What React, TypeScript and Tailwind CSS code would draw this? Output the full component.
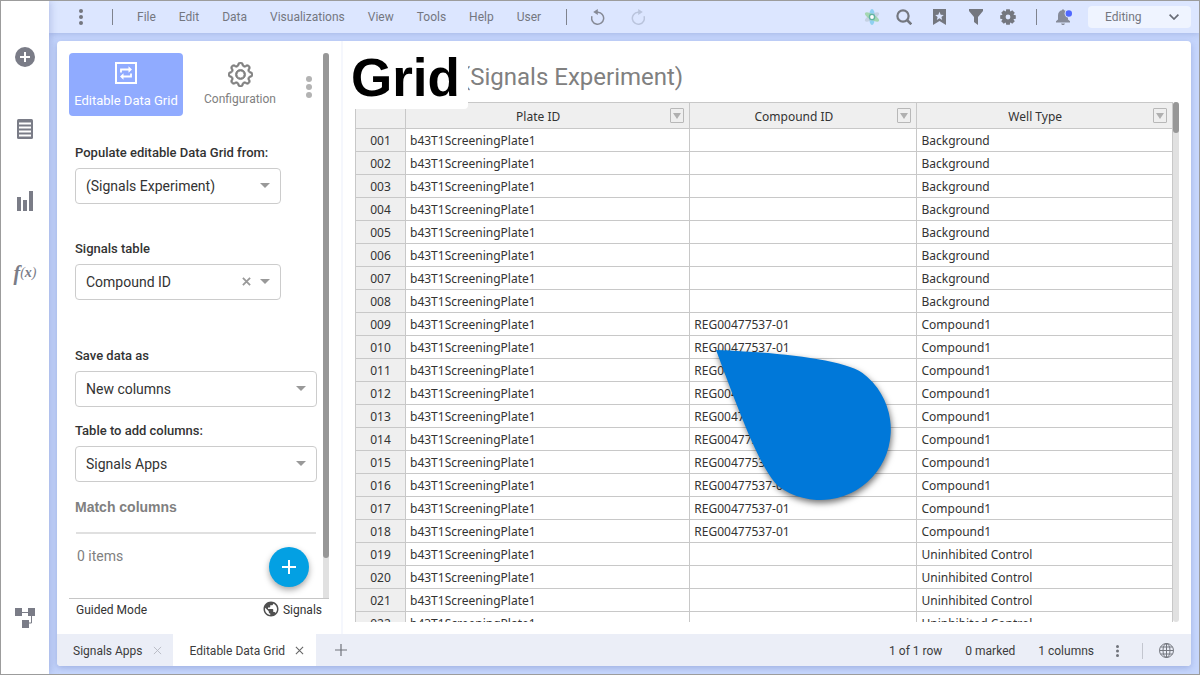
import React from "react";
import { BsGear } from "react-icons/bs";
import { MdPublic } from "react-icons/md";

const menus = ["File", "Edit", "Data", "Visualizations", "View", "Tools", "Help", "User"];

const rows = Array.from({ length: 22 }, (_, i) => ({
  id: String(i + 1).padStart(3, "0"),
  plate: "b43T1ScreeningPlate1",
  compound: i >= 8 && i < 18 ? "REG00477537-01" : "",
  well: i < 8 ? "Background" : i < 18 ? "Compound1" : "Uninhibited Control",
}));

function Dots({ r, gap, className }: { r: number; gap: number; className: string }) {
  const h = gap * 2 + r * 2;
  return (
    <svg width={r * 2} height={h} viewBox={`0 0 ${r * 2} ${h}`} className={className} fill="currentColor" aria-hidden="true">
      {[0, 1, 2].map((n) => (
        <circle key={n} cx={r} cy={r + n * gap} r={r} />
      ))}
    </svg>
  );
}

function Cross({ size, width, className }: { size: number; width: number; className: string }) {
  return (
    <svg width={size} height={size} viewBox="0 0 10 10" className={className} fill="none" stroke="currentColor" strokeWidth={width} aria-hidden="true">
      <path d="M1 1l8 8M9 1l-8 8" />
    </svg>
  );
}

function Gear() {
  return (
    <svg width="16" height="16" viewBox="0 0 16 16" fill="currentColor" aria-hidden="true">
      <circle cx="8" cy="8" r="4.2" fill="none" stroke="currentColor" strokeWidth="3.6" />
      {[0, 45, 90, 135, 180, 225, 270, 315].map((a) => (
        <path key={a} d="M6.2 0.2h3.6l.5 3h-4.6z" transform={`rotate(${a} 8 8)`} />
      ))}
    </svg>
  );
}

function Field({ id, label, value, wide, clearable }: { id: string; label: string; value: string; wide?: boolean; clearable?: boolean }) {
  return (
    <div className="flex flex-col">
      <label htmlFor={id} className="h-4 text-[13px] leading-4 font-medium text-[#333]">
        {label}
      </label>
      <div className={wide ? "relative mt-[7px] w-[242px]" : "relative mt-[7px] w-[206px]"}>
        <select id={id} className="h-9 w-full appearance-none rounded border border-[#ccc] bg-white px-2.5 text-sm text-[#333]">
          <option>{value}</option>
        </select>
        <div className="pointer-events-none absolute inset-y-0 right-[11px] flex items-center gap-[9px] pb-px text-[#999]">
          {clearable && <Cross size={9} width={2} className="" />}
          <svg width="10" height="5" viewBox="0 0 10 5" fill="currentColor" aria-hidden="true">
            <path d="M0 0h10L5 5z" />
          </svg>
        </div>
      </div>
    </div>
  );
}

function Sidebar() {
  return (
    <nav aria-label="Tools" className="z-10 flex w-12 shrink-0 flex-col items-center bg-white pt-[46px] pb-[46px] text-[#7a7c87] shadow-[1px_0_8px_rgba(90,110,180,0.35)]">
      <button aria-label="Add" className="flex h-5 items-center">
        <svg width="20" height="20" viewBox="0 0 20 20">
          <circle cx="10" cy="10" r="10" fill="currentColor" />
          <path d="M10 5v10M5 10h10" stroke="#fff" strokeWidth="2" />
        </svg>
      </button>
      <button aria-label="Data" className="mt-[52px] flex h-5 items-center">
        <svg width="16" height="20" viewBox="0 0 16 20">
          <rect width="16" height="20" rx="1.5" fill="currentColor" />
          <path d="M2 4.5h12M2 8.5h12M2 12.5h12M2 16.5h12" stroke="#fff" strokeWidth="1.8" />
        </svg>
      </button>
      <button aria-label="Visualizations" className="mt-[52px] flex h-5 items-center">
        <svg width="16" height="20" viewBox="0 0 16 20" fill="currentColor">
          <path d="M0 6h4v14H0zM6 9h4v11H6zM12 0h4v20h-4z" />
        </svg>
      </button>
      <button aria-label="Functions" className="mt-[52px] flex h-5 items-center font-['Liberation_Serif',serif] font-bold italic">
        <span className="text-xl leading-5">f</span>
        <span className="text-sm leading-5">
          <span className="font-normal">(</span>x<span className="font-normal">)</span>
        </span>
      </button>
      <button aria-label="Data canvas" className="mt-auto flex h-5 items-center">
        <svg width="20" height="20" viewBox="0 0 20 20" fill="currentColor">
          <path d="M0 0h7v8H0zM13 0h7v8h-7zM7 12h7v8H7z" />
          <path d="M7 4.5h6M16.500 8v7H14" fill="none" stroke="currentColor" />
        </svg>
      </button>
    </nav>
  );
}

function TopBar() {
  return (
    <header className="flex h-8 shrink-0 items-center bg-[#dce6ff] pr-2 pl-[30px] text-xs text-[#74777f] shadow-[0_1px_6px_rgba(90,110,180,0.3)]">
      <button aria-label="More">
        <Dots r={2} gap={6} className="" />
      </button>
      <span className="ml-[29px] h-4 w-px bg-[#7f838e]" />
      <nav aria-label="Main menu" className="ml-6 flex gap-[23px]">
        {menus.map((m) => (
          <button key={m}>{m}</button>
        ))}
      </nav>
      <span className="ml-[25px] h-4 w-px bg-[#7f838e]" />
      <button aria-label="Undo" className="ml-6">
        <svg width="14" height="16" viewBox="0 0 14 16" fill="none" stroke="#868a96" strokeWidth="1.5">
          <path d="M1 7.200A6 6 0 1 0 7 3.200H5" />
          <path d="M6.800 0v6L2.200 3z" fill="#868a96" stroke="none" />
        </svg>
      </button>
      <button aria-label="Redo" className="ml-[26px]" disabled>
        <svg width="14" height="16" viewBox="0 0 14 16" fill="none" stroke="#bac4dc" strokeWidth="1.500">
          <path d="M13 7.200A6 6 0 1 1 7 3.200H9" />
          <path d="M7.200 0v6L11.800 3z" fill="#bac4dc" stroke="none" />
        </svg>
      </button>
      <div className="ml-auto flex items-center">
        <button aria-label="Signals">
          <svg width="16" height="16" viewBox="0 0 16 16">
            <ellipse cx="8" cy="8" rx="2.900" ry="8" fill="#8fd0f0" />
            <ellipse cx="8" cy="8" rx="2.900" ry="8" fill="#b6c4d0" opacity=".6" transform="rotate(60 8 8)" />
            <ellipse cx="8" cy="8" rx="2.900" ry="8" fill="#9bd3a4" opacity=".85" transform="rotate(-60 8 8)" />
            <circle cx="8" cy="8" r="3.200" fill="#62b3a0" />
            <circle cx="8" cy="8" r="1.900" fill="#fff" />
          </svg>
        </button>
        <button aria-label="Search" className="ml-4">
          <svg width="16" height="16" viewBox="0 0 16 16" fill="none" stroke="currentColor">
            <circle cx="7" cy="7" r="5.600" strokeWidth="2.200" />
            <path d="M11 11l4.300 4.300" strokeWidth="2.600" />
          </svg>
        </button>
        <button aria-label="Bookmarks" className="ml-[21px]">
          <svg width="13" height="16" viewBox="0 0 13 16">
            <path d="M0 0h13v16l-6.500-4L0 16z" fill="currentColor" />
            <path d="M6.500 2.800l1.200 2.900 3.100.2-2.400 2 .8 3-2.700-1.700-2.700 1.700.8-3-2.400-2 3.100-.2z" fill="#dce6ff" />
          </svg>
        </button>
        <button aria-label="Filters" className="ml-[23px]">
          <svg width="14" height="16" viewBox="0 0 14 16" fill="currentColor">
            <path d="M0 0h14v2L9 8v8l-4-3V8L0 2z" />
          </svg>
        </button>
        <button aria-label="Settings" className="ml-[17px]">
          <Gear />
        </button>
        <span className="ml-5 h-4 w-px bg-[#7f838e]" />
        <button aria-label="Notifications" className="ml-[19px]">
          <svg width="17" height="16" viewBox="0 0 17 16" fill="#868b99">
            <path d="M0 13.500v-1.200L2 10.500V6.500C2 3.500 3.500 1.600 6 1.200V.5h2v.7C10.500 1.600 12 3.500 12 6.500v4l2 1.800v1.200zM5 14.500h4l-1 1.500H6z" />
            <circle cx="12.800" cy="4.500" r="4.200" fill="#dce6ff" />
            <circle cx="12.800" cy="4.500" r="3.200" fill="#5068ff" />
          </svg>
        </button>
        <div className="relative ml-[15px]">
          <select aria-label="Mode" className="h-[22px] w-[103px] appearance-none rounded bg-[#eff4ff] pl-[17px] text-xs text-[#74777f]">
            <option>Editing</option>
          </select>
          <svg width="10" height="6" viewBox="0 0 10 6" className="pointer-events-none absolute top-2 right-3" fill="none" stroke="#686c76" strokeWidth="1.700">
            <path d="M.6.6L5 5 9.400.6" />
          </svg>
        </div>
      </div>
    </header>
  );
}

function ConfigPanel() {
  return (
    <section className="flex w-[284px] shrink-0 flex-col pt-3 pl-3">
      <div className="flex h-[546px] w-[260px] border-b border-[#c6c6c6]">
        <div className="flex min-w-0 flex-1 flex-col">
          <div className="flex items-center text-xs">
            <button className="flex h-[63px] w-[114px] flex-col items-center rounded bg-[#90abff] pt-[9px] text-[13px] text-white">
              <svg width="22" height="22" viewBox="0 0 22 22" fill="none" stroke="#fff" aria-hidden="true">
                <rect x="1" y="1" width="20" height="20" strokeWidth="2" />
                <path d="M6 10.500V7.500h8M16 11.500v3H8" strokeWidth="1.800" />
                <path d="M13.500 4.300l3.500 3.200-3.500 3.200zM8.500 11.300L5 14.500l3.500 3.200z" fill="#fff" stroke="none" />
              </svg>
              <span className="mt-[9px] leading-4 whitespace-nowrap">Editable Data Grid</span>
            </button>
            <button className="flex h-[63px] w-[114px] flex-col items-center pt-[9px] text-[#808080]">
              <BsGear size={25} stroke="currentColor" strokeWidth={0.5} />
              <span className="mt-1 leading-4">Configuration</span>
            </button>
            <button aria-label="More options" className="mt-1 ml-[9px]">
              <Dots r={3} gap={8} className="text-[#b3b3b3]" />
            </button>
          </div>
          <div className="flex flex-1 flex-col pt-[29px] pl-1.5">
            <Field id="source" label="Populate editable Data Grid from:" value="(Signals Experiment)" />
            <div className="mt-[37px]">
              <Field id="signals-table" label="Signals table" value="Compound ID" clearable />
            </div>
            <div className="mt-12">
              <Field id="save-as" label="Save data as" value="New columns" wide />
            </div>
            <div className="mt-4">
              <Field id="target" label="Table to add columns:" value="Signals Apps" wide />
            </div>
            <h2 className="mt-[15px] font-['Liberation_Sans',sans-serif] text-sm font-bold text-[#808080]">Match columns</h2>
            <hr className="mt-[15px] mr-[7px] ml-px border-t-2 border-[#e0e0e0]" />
            <div className="flex justify-between pr-3.5 pl-0.5">
              <p className="mt-3 text-sm text-[#808080]">0 items</p>
              <button aria-label="Add column" className="mt-[13px] flex size-10 items-center justify-center rounded-full bg-[#03a0e3] shadow-[0_3px_6px_rgba(0,0,0,0.35)]">
                <svg width="14" height="14" viewBox="0 0 14 14" stroke="#fff" strokeWidth="2">
                  <path d="M7 0v14M0 7h14" />
                </svg>
              </button>
            </div>
          </div>
        </div>
        <div className="w-1.5 rounded-t-full bg-[#e1e1e1]">
          <div className="h-[505px] rounded-full bg-[#979797]" />
        </div>
      </div>
      <div className="flex w-[260px] items-center justify-between pt-px pr-[7px] pl-[7px] text-xs text-[#333]">
        <span className="pt-0.5">Guided Mode</span>
        <a href="#signals" className="flex items-center gap-[3px]">
          <MdPublic size={18} className="text-[#505050]" />
          <span className="pt-0.5">Signals</span>
        </a>
      </div>
    </section>
  );
}

function HeadCell({ children }: { children: React.ReactNode }) {
  return (
    <th className="h-[26px] border-r border-b border-[#c8c8c8] bg-[#efefef] p-0 font-normal">
      <div className="flex items-center pr-[5px]">
        <span className="flex-1 pt-px leading-[21px]">{children}</span>
        <button aria-label="Filter column" className="flex h-[15px] w-3.5 items-center justify-center rounded-[1px] border border-[#b8b8b8]">
          <svg width="8" height="6" viewBox="0 0 8 6" fill="#b0b0b0">
            <path d="M0 0h8L4 6z" />
          </svg>
        </button>
      </div>
    </th>
  );
}

function DataPanel() {
  return (
    <section className="relative flex min-w-0 flex-1 flex-col border-l-2 border-[#f5f7fd] pr-3 pl-3">
      <h1 className="flex h-[61px] items-center pt-2.5 pl-[107px] text-2xl text-[#808080]">(Signals Experiment)</h1>
      <div className="absolute top-1 left-0 flex h-16 w-[125px] items-center rounded-br bg-white pl-2 font-['Liberation_Sans',sans-serif] text-[53px] leading-none font-bold text-black">
        Grid
      </div>
      <div className="mb-3 flex min-h-0 flex-1 overflow-hidden">
        <div className="min-w-0 flex-1">
          <table className="w-full table-fixed border-separate border-spacing-0 border-t border-l border-[#c8c8c8] font-['Noto_Sans',sans-serif] text-xs leading-5 text-[#333]">
            <colgroup>
              <col className="w-[50px]" />
              <col className="w-[34.8%]" />
              <col className="w-[27.8%]" />
              <col />
            </colgroup>
            <thead>
              <tr>
                <th aria-label="Row" className="border-r border-b border-[#c8c8c8] bg-[#efefef]" />
                <HeadCell>Plate ID</HeadCell>
                <HeadCell>Compound ID</HeadCell>
                <HeadCell>Well Type</HeadCell>
              </tr>
            </thead>
            <tbody>
              {rows.map((r) => (
                <tr key={r.id}>
                  <th scope="row" className="border-r border-b border-[#c8c8c8] bg-[#efefef] px-0 pt-0.5 pb-0 font-normal">
                    {r.id}
                  </th>
                  <td className="border-r border-b border-[#c8c8c8] px-1 pt-0.5 pb-0">{r.plate}</td>
                  <td className="border-r border-b border-[#c8c8c8] px-1 pt-0.5 pb-0">{r.compound}</td>
                  <td className="border-r border-b border-[#c8c8c8] px-1 pt-0.5 pb-0">{r.well}</td>
                </tr>
              ))}
            </tbody>
          </table>
        </div>
        <div className="w-1.5 rounded-full bg-[#e1e1e1]">
          <div className="h-[31px] rounded-full bg-[#979797]" />
        </div>
      </div>
      <svg width="190" height="165" viewBox="710 345 190 165" className="pointer-events-none absolute top-[304px] left-[367px] drop-shadow-[1px_3px_3px_rgba(0,0,0,0.55)]" aria-hidden="true">
        <path d="M716 350C770 352 842 358.500 862.500 373A70.500 70.500 0 1 1 778 486C759 468 735 400 716 350z" fill="#0078d9" />
      </svg>
    </section>
  );
}

function Footer() {
  return (
    <footer className="flex h-8 shrink-0 items-center bg-[#ebeef7] text-xs text-[#3c3c3c]">
      <div className="flex h-full items-center gap-2.5 pt-px pr-4 pl-4">
        <button>Signals Apps</button>
        <button aria-label="Close Signals Apps">
          <Cross size={9} width={1} className="mr-[-5px] text-[#b5b8c2]" />
        </button>
      </div>
      <div className="flex h-full items-center gap-2.5 bg-white pt-px pr-3 pl-[17px]">
        <button>Editable Data Grid</button>
        <button aria-label="Close Editable Data Grid">
          <Cross size={9} width={1.200} className="text-[#666]" />
        </button>
      </div>
      <button aria-label="New page" className="ml-[19px]">
        <svg width="12" height="12" viewBox="0 0 12 12" stroke="#70737b" strokeWidth="1.200">
          <path d="M6 0v12M0 6h12" />
        </svg>
      </button>
      <div className="ml-auto flex items-center pt-px pr-[17px]">
        <span>1 of 1 row</span>
        <span className="ml-[23px]">0 marked</span>
        <span className="ml-[23px]">1 columns</span>
        <button aria-label="More status" className="ml-[22px]">
          <Dots r={1.500} gap={4.500} className="text-[#70737b]" />
        </button>
        <span className="ml-[23px] h-4 w-px bg-[#c3c6cf]" />
        <button aria-label="Language" className="ml-4">
          <svg width="15" height="15" viewBox="0 0 15 15" fill="none" stroke="#73767e" strokeWidth="1">
            <circle cx="7.500" cy="7.500" r="7" />
            <ellipse cx="7.500" cy="7.500" rx="3.500" ry="7" />
            <path d="M7.500.5v14M.5 7.500h14M1.500 4h12M1.500 11h12" />
          </svg>
        </button>
      </div>
    </footer>
  );
}

export default function App() {
  return (
    <div className="flex h-screen overflow-hidden border border-[#9c9c9c] bg-white font-['Roboto',sans-serif]">
      <Sidebar />
      <div className="flex min-w-0 flex-1 flex-col bg-[#c6d6fc]">
        <TopBar />
        <main className="m-2 flex min-h-0 flex-1 flex-col overflow-hidden rounded bg-white shadow-[0_2px_6px_rgba(90,110,180,0.35)]">
          <div className="flex min-h-0 flex-1">
            <ConfigPanel />
            <DataPanel />
          </div>
          <Footer />
        </main>
      </div>
    </div>
  );
}
